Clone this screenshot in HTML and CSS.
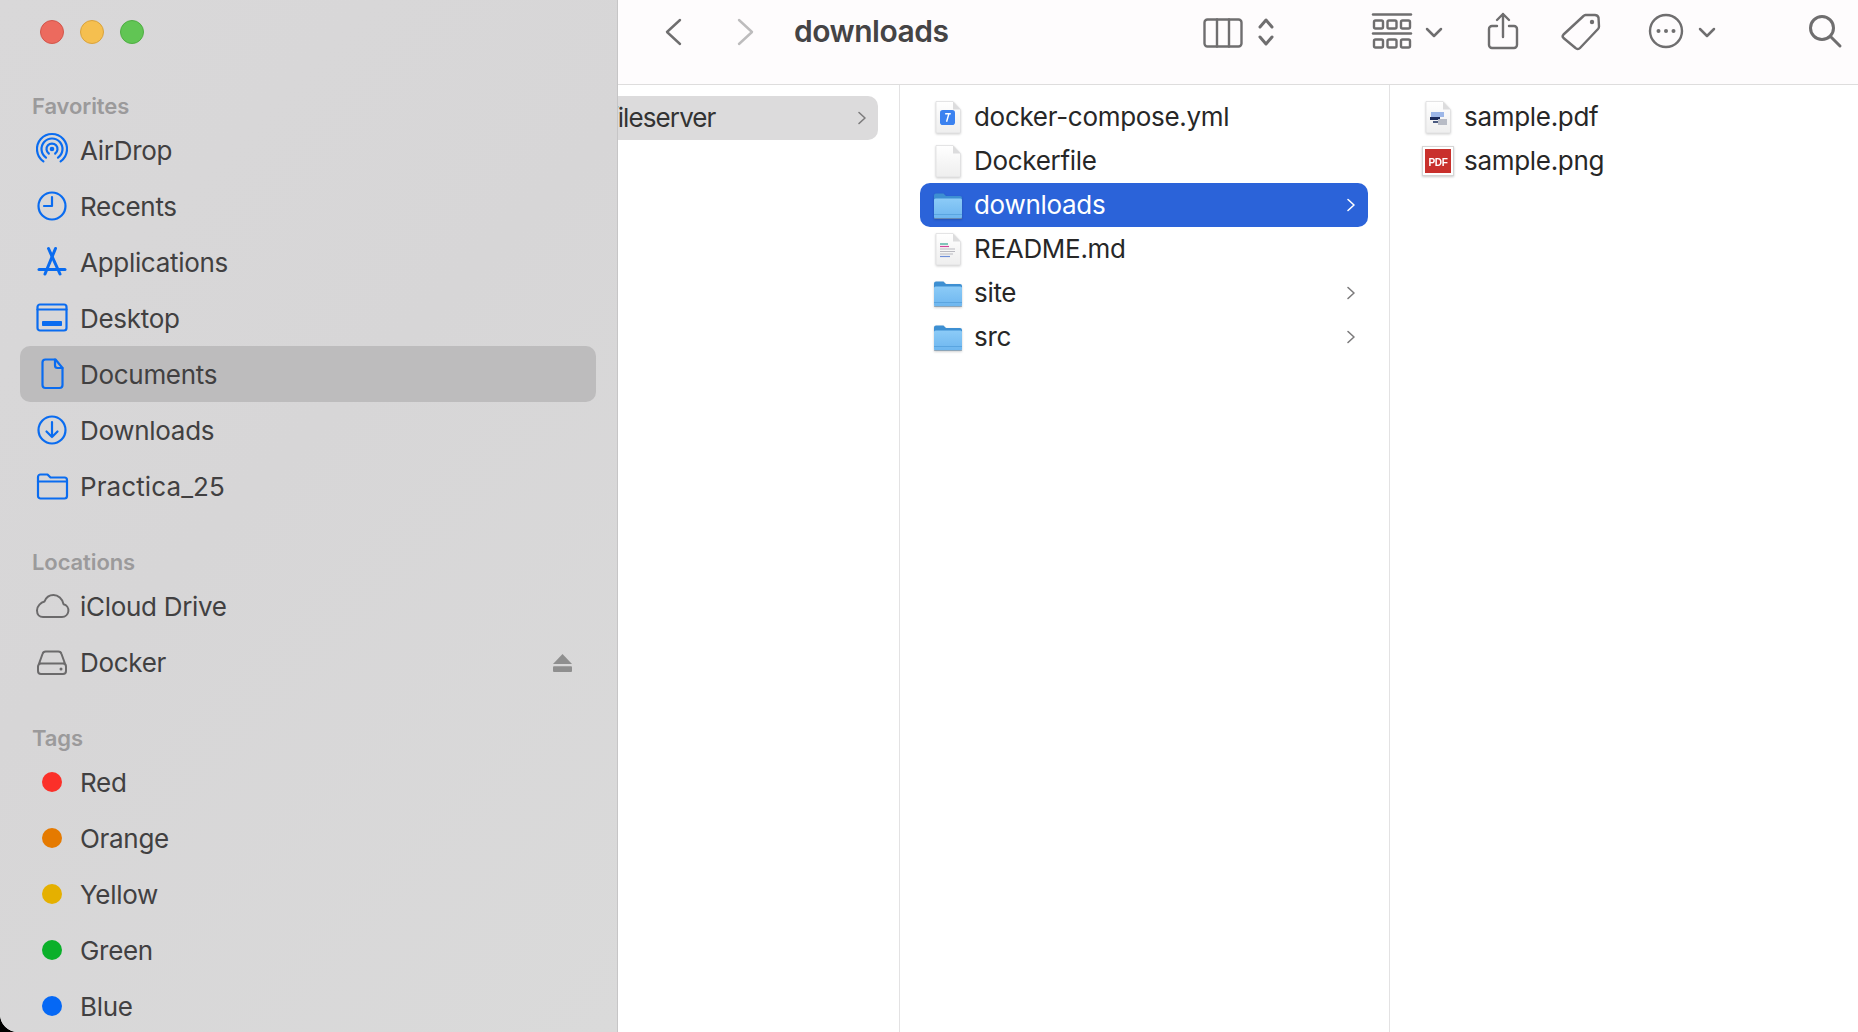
FILE: index.html
```html
<!DOCTYPE html>
<html lang="en">
<head>
<meta charset="utf-8">
<title>downloads</title>
<link rel="stylesheet" href="styles.css">
</head>
<body>
<svg class="defs" width="0" height="0" aria-hidden="true">
  <defs>
    <linearGradient id="fb" x1="0" y1="0" x2="0" y2="1"><stop offset="0" stop-color="#8ccbf7"/><stop offset="1" stop-color="#6db6ef"/></linearGradient>
    <linearGradient id="pg" x1="0" y1="0" x2="0" y2="1"><stop offset="0" stop-color="#ffffff"/><stop offset="1" stop-color="#eeeeee"/></linearGradient>
    <symbol id="folder" viewBox="0 0 32 32">
      <path d="M2 6.500a2 2 0 0 1 2-2h7.500l2.500 2.500h14a2 2 0 0 1 2 2V12H2z" fill="#3d8fd2"/>
      <rect x="2" y="9.500" width="28" height="20" rx="1.600" fill="url(#fb)"/>
      <rect x="2" y="25" width="28" height="1" fill="#5aa5e0"/>
      <rect x="2" y="29" width="28" height="1" fill="#7d8a96" opacity=".55"/>
    </symbol>
    <symbol id="page" viewBox="0 0 32 36">
      <path d="M4 2.500h17l7.500 8V33a1 1 0 0 1-1 1H5a1 1 0 0 1-1-1z" fill="url(#pg)" stroke="#dededf" stroke-width=".8"/>
      <path d="M21 2.500v8h7.500z" fill="#dcdcdd"/>
    </symbol>
    <symbol id="chev" viewBox="0 0 12 16">
      <path d="M3 2.500 9 8l-6 5.500" fill="none" stroke="currentColor" stroke-width="1.600" stroke-linecap="round" stroke-linejoin="round"/>
    </symbol>
    <symbol id="drop" viewBox="0 0 18 12">
      <path d="M2 3l7 7 7-7" fill="none" stroke="#6f6e6f" stroke-width="2.500" stroke-linecap="round" stroke-linejoin="round"/>
    </symbol>
  </defs>
</svg>

<div class="window">
  <aside class="sidebar">
    <div class="traffic">
      <span class="light light-red"></span>
      <span class="light light-yellow"></span>
      <span class="light light-green"></span>
    </div>

    <section class="group">
      <h2 class="group-title">Favorites</h2>
      <div class="side-row">
        <svg class="side-icon" viewBox="0 0 40 40"><g class="blue-line"><path d="M16.800 23.500a5.500 5.500 0 1 1 6.400 0"/><path d="M14 27.600a10.500 10.500 0 1 1 12 0"/><path d="M11.400 31.300a15 15 0 1 1 17.200 0"/></g><circle cx="20" cy="19" r="2.300" class="blue-fill"/></svg>
        <span>AirDrop</span>
      </div>
      <div class="side-row">
        <svg class="side-icon" viewBox="0 0 40 40"><g class="blue-line"><circle cx="20" cy="20" r="13.500"/><path d="M20 11v9h-8"/></g></svg>
        <span>Recents</span>
      </div>
      <div class="side-row">
        <svg class="side-icon" viewBox="0 0 40 40"><g class="blue-line blue-heavy"><path d="M23.500 6.500 13 32"/><path d="M16.500 6.500 28 32"/><path d="M7 27.500h26"/></g></svg>
        <span>Applications</span>
      </div>
      <div class="side-row">
        <svg class="side-icon" viewBox="0 0 40 40"><g class="blue-line"><rect x="5.500" y="6.500" width="29" height="26" rx="2.500"/><path d="M5.500 11.500h29"/></g><rect x="10" y="23" width="20" height="5" rx=".8" class="blue-fill"/></svg>
        <span>Desktop</span>
      </div>
      <div class="side-row is-active">
        <svg class="side-icon" viewBox="0 0 40 40"><g class="blue-line"><path d="M13.500 5.500h10l7 8.500v17a3 3 0 0 1-3 3h-14a3 3 0 0 1-3-3V8.500a3 3 0 0 1 3-3z"/><path d="M23 5.500v6a2.500 2.500 0 0 0 2.500 2.500h5"/></g></svg>
        <span>Documents</span>
      </div>
      <div class="side-row">
        <svg class="side-icon" viewBox="0 0 40 40"><g class="blue-line"><circle cx="20" cy="20" r="13.500"/><path d="M20 12v15M14.500 21.500 20 27l5.500-5.500"/></g></svg>
        <span>Downloads</span>
      </div>
      <div class="side-row">
        <svg class="side-icon" viewBox="0 0 40 40"><g class="blue-line"><path d="M6 11a2.500 2.500 0 0 1 2.500-2.500h7l3 3h14A2.500 2.500 0 0 1 35 14v16a2.500 2.500 0 0 1-2.500 2.500h-24A2.500 2.500 0 0 1 6 30z"/><path d="M6 15.500h29"/></g></svg>
        <span class="wide-name">Practica_25</span>
      </div>
    </section>

    <section class="group">
      <h2 class="group-title">Locations</h2>
      <div class="side-row">
        <svg class="side-icon" viewBox="0 0 40 40"><path class="gray-line" d="M11 31h19a6.500 6.500 0 0 0 1.500-12.800C30.500 12.500 26 9 21.500 9c-4 0-7.500 2.500-9 6.500C9 16.500 5 20 5 24.500 5 28.500 7.500 31 11 31z"/></svg>
        <span>iCloud Drive</span>
      </div>
      <div class="side-row">
        <svg class="side-icon" viewBox="0 0 40 40"><path class="gray-line" d="M6 24.500 10.500 12a3.500 3.500 0 0 1 3.200-2.500h12.600a3.500 3.500 0 0 1 3.200 2.500L34 24.500M9 21.500h22a3 3 0 0 1 3 3V29a3 3 0 0 1-3 3H9a3 3 0 0 1-3-3v-4.500a3 3 0 0 1 3-3z"/><circle cx="29" cy="27" r="1.500" class="gray-fill"/></svg>
        <span>Docker</span>
        <svg class="eject" viewBox="0 0 22 20"><path d="M11 1 21 11.500H1z" fill="#8f8f8f"/><rect x="1" y="14" width="20" height="6" rx="1" fill="#8f8f8f"/></svg>
      </div>
    </section>

    <section class="group">
      <h2 class="group-title">Tags</h2>
      <div class="side-row"><span class="side-dot-box"><span class="dot dot-red"></span></span><span>Red</span></div>
      <div class="side-row"><span class="side-dot-box"><span class="dot dot-orange"></span></span><span>Orange</span></div>
      <div class="side-row"><span class="side-dot-box"><span class="dot dot-yellow"></span></span><span>Yellow</span></div>
      <div class="side-row"><span class="side-dot-box"><span class="dot dot-green"></span></span><span>Green</span></div>
      <div class="side-row"><span class="side-dot-box"><span class="dot dot-blue"></span></span><span>Blue</span></div>
    </section>
  </aside>

  <main class="main">
    <header class="toolbar">
      <svg class="tb tb-back" viewBox="0 0 18 28"><path d="M16 2 3 14l13 12" class="tb-line"/></svg>
      <svg class="tb tb-forward" viewBox="0 0 18 28"><path d="M2 2l13 12L2 26" class="tb-line tb-dim"/></svg>
      <h1 class="title">downloads</h1>
      <svg class="tb tb-columns" viewBox="0 0 40 30"><g class="tb-line"><rect x="1.500" y="1.500" width="37" height="27" rx="3"/><path d="M14 1.500v27M26 1.500v27"/></g></svg>
      <svg class="tb tb-updown" viewBox="0 0 18 30"><g class="tb-line tb-thick"><path d="M3 10l6-7 6 7"/><path d="M3 20l6 7 6-7"/></g></svg>
      <svg class="tb tb-group" viewBox="0 0 38 36"><g class="tb-line"><path d="M0 1.500h38" /><rect x="1" y="7.500" width="9" height="8" rx="1.500"/><rect x="14.500" y="7.500" width="9" height="8" rx="1.500"/><rect x="28" y="7.500" width="9" height="8" rx="1.500"/><path d="M0 20.500h38"/><rect x="1" y="26.500" width="9" height="8" rx="1.500"/><rect x="14.500" y="26.500" width="9" height="8" rx="1.500"/><rect x="28" y="26.500" width="9" height="8" rx="1.500"/></g></svg>
      <svg class="tb tb-drop tb-drop-group"><use href="#drop"/></svg>
      <svg class="tb tb-share" viewBox="0 0 32 38"><g class="tb-line"><path d="M10 14H5a3 3 0 0 0-3 3v16a3 3 0 0 0 3 3h22a3 3 0 0 0 3-3V17a3 3 0 0 0-3-3h-5"/><path d="M16 25V2M10 8l6-6 6 6"/></g></svg>
      <svg class="tb tb-tag" viewBox="0 0 40 38"><path class="tb-line" d="M2.500 21.500 22.500 3a3 3 0 0 1 2-1h9a4 4 0 0 1 4 2.500l.5 9a4 4 0 0 1-1 2.500L19 35a3 3 0 0 1-4.500 0L2.500 25a2.500 2.500 0 0 1 0-3.500z"/><circle cx="31" cy="9" r="2.200" fill="#6f6e6f"/></svg>
      <svg class="tb tb-more" viewBox="0 0 36 36"><circle class="tb-line" cx="18" cy="18" r="16"/><circle cx="10.500" cy="18" r="2" fill="#6f6e6f"/><circle cx="18" cy="18" r="2" fill="#6f6e6f"/><circle cx="25.500" cy="18" r="2" fill="#6f6e6f"/></svg>
      <svg class="tb tb-drop tb-drop-more"><use href="#drop"/></svg>
      <svg class="tb tb-search" viewBox="0 0 34 34"><g class="tb-line tb-thick"><circle cx="14" cy="14" r="11.500"/><path d="M22.500 22.500 32 32"/></g></svg>
    </header>

    <div class="columns">
      <div class="column col-parent">
        <div class="row row-parent">
          <span class="name">fileserver</span>
          <svg class="chev"><use href="#chev"/></svg>
        </div>
      </div>

      <div class="column col-current">
        <div class="row">
          <span class="file-box">
            <svg class="doc"><use href="#page"/></svg>
            <svg class="doc-badge" viewBox="0 0 16 16"><rect width="16" height="16" rx="3" fill="#3b82f0"/><path d="M5.500 4h6M9.500 4 7 12.500" stroke="#fff" stroke-width="1.500" fill="none"/></svg>
          </span>
          <span class="name">docker-compose.yml</span>
        </div>
        <div class="row">
          <span class="file-box"><svg class="doc"><use href="#page"/></svg></span>
          <span class="name">Dockerfile</span>
        </div>
        <div class="row is-selected">
          <span class="file-box"><svg class="folder"><use href="#folder"/></svg></span>
          <span class="name">downloads</span>
          <svg class="chev"><use href="#chev"/></svg>
        </div>
        <div class="row">
          <span class="file-box">
            <svg class="doc"><use href="#page"/></svg>
            <svg class="doc-lines" viewBox="0 0 18 16"><path d="M1 1h8" stroke="#2fa38f"/><path d="M1 3.500h9" stroke="#d0459a"/><path d="M1 6h15M1 8.500h15M1 11h13" stroke="#b9b9c0"/><path d="M1 13.500h10" stroke="#6f8fd8"/></svg>
          </span>
          <span class="name">README.md</span>
        </div>
        <div class="row">
          <span class="file-box"><svg class="folder"><use href="#folder"/></svg></span>
          <span class="name">site</span>
          <svg class="chev"><use href="#chev"/></svg>
        </div>
        <div class="row">
          <span class="file-box"><svg class="folder"><use href="#folder"/></svg></span>
          <span class="name">src</span>
          <svg class="chev"><use href="#chev"/></svg>
        </div>
      </div>

      <div class="column col-detail">
        <div class="row">
          <span class="file-box">
            <svg class="doc"><use href="#page"/></svg>
            <svg class="doc-thumb" viewBox="0 0 18 14"><rect x="1" y="0" width="13" height="5" fill="#9db7e8"/><rect x="0" y="5" width="10" height="3" fill="#1c2c5c"/><rect x="8" y="7" width="9" height="6" fill="#b8bcc6"/><rect x="3" y="9" width="5" height="2" fill="#4a5a80"/></svg>
          </span>
          <span class="name">sample.pdf</span>
        </div>
        <div class="row">
          <span class="file-box">
            <svg class="png-thumb" viewBox="0 0 32 30"><rect x=".5" y=".5" width="31" height="29" fill="#fff" stroke="#d5d5d5"/><rect x="3" y="3" width="26" height="24" fill="#c9302c"/><text x="16" y="19.500" class="pdf-label" text-anchor="middle">PDF</text></svg>
          </span>
          <span class="name">sample.png</span>
        </div>
      </div>
    </div>
  </main>
</div>
</body>
</html>
```

FILE: styles.css
```css
* { box-sizing: border-box; }

html, body {
  margin: 0;
  height: 100%;
  overflow: hidden;
  background: #000;
}

.defs { position: absolute; }

.window {
  display: flex;
  width: 1858px;
  height: 1032px;
  overflow: hidden;
  border-bottom-left-radius: 18px;
  font-family: Inter, "Liberation Sans", sans-serif;
  background: #fff;
}

/* Sidebar */
.sidebar {
  flex: 0 0 618px;
  height: 1032px;
  overflow: hidden;
  background: linear-gradient(135deg, #d9d8d9 0%, #d7d6d7 45%, #dadada 100%);
  border-right: 1px solid #c6c5c6;
  color: #414041;
}

.traffic {
  display: flex;
  gap: 16px;
  height: 88px;
  padding: 20px 0 0 40px;
}

.light {
  width: 24px;
  height: 24px;
  border-radius: 50%;
}
.light-red { background: #ec6a5e; border: 1px solid #d2564b; }
.light-yellow { background: #f5bf4f; border: 1px solid #d9a33d; }
.light-green { background: #61c554; border: 1px solid #4fae43; }

.group + .group { margin-top: 30px; }

.group-title {
  margin: 0;
  height: 34px;
  padding-left: 32px;
  font-size: 22px;
  line-height: 36px;
  font-weight: 600;
  color: #9b9a9b;
  letter-spacing: -0.1px;
}

.side-row {
  display: flex;
  align-items: center;
  height: 56px;
  margin: 0 21px 0 20px;
  padding: 0 23px 0 12px;
  border-radius: 10px;
  font-size: 26px;
  letter-spacing: -0.3px;
  white-space: nowrap;
}
.side-row.is-active { background: #bdbcbd; }
.wide-name { letter-spacing: 0.1px; }

.side-icon {
  flex: none;
  width: 40px;
  height: 40px;
  margin-right: 8px;
}
.side-dot-box {
  flex: none;
  display: flex;
  align-items: center;
  justify-content: center;
  width: 40px;
  margin-right: 8px;
}

.blue-line { fill: none; stroke: #0a6cf0; stroke-width: 2.2; stroke-linecap: round; stroke-linejoin: round; }
.blue-heavy { stroke-width: 3; }
.blue-fill { fill: #0a6cf0; }
.gray-line { fill: none; stroke: #6b6a6b; stroke-width: 2; stroke-linecap: round; stroke-linejoin: round; }
.gray-fill { fill: #6b6a6b; }

.eject {
  width: 21px;
  height: 19px;
  margin-left: auto;
}

.dot {
  width: 20px;
  height: 20px;
  border-radius: 50%;
}
.dot-red { background: #fb3029; }
.dot-orange { background: #e57a00; }
.dot-yellow { background: #e5b000; }
.dot-green { background: #0bb02a; }
.dot-blue { background: #0568f5; }

/* Main area */
.main {
  flex: 1;
  min-width: 0;
  display: flex;
  flex-direction: column;
}

.toolbar {
  flex: 0 0 85px;
  display: flex;
  align-items: flex-start;
  background: #fefcfd;
  border-bottom: 1px solid #dedddd;
}

.tb { flex: none; display: block; overflow: visible; }
.tb-line { fill: none; stroke: #6f6e6f; stroke-width: 2.4; stroke-linecap: round; stroke-linejoin: round; }
.tb-thick { stroke-width: 3; }
.tb-dim { stroke: #bdbcbd; }

.tb-back { width: 18px; height: 28px; margin: 18px 0 0 46px; }
.tb-forward { width: 18px; height: 28px; margin: 18px 0 0 55px; }

.title {
  margin: 11px 0 0 39px;
  width: 409px;
  font-size: 30px;
  line-height: 40px;
  font-weight: 600;
  letter-spacing: -0.5px;
  color: #454445;
}

.tb-columns { width: 40px; height: 30px; margin: 18px 0 0 0; }
.tb-updown { width: 18px; height: 30px; margin: 17px 0 0 14px; }
.tb-group { width: 38px; height: 36px; margin: 13px 0 0 98px; }
.tb-drop { width: 18px; height: 12px; margin-top: 26px; }
.tb-drop-group { margin-left: 14px; }
.tb-share { width: 32px; height: 38px; margin: 12px 0 0 44px; }
.tb-tag { width: 40px; height: 38px; margin: 13px 0 0 42px; }
.tb-more { width: 36px; height: 36px; margin: 13px 0 0 47px; }
.tb-drop-more { margin-left: 14px; }
.tb-search { width: 34px; height: 34px; margin: 14px 0 0 92px; }

.columns {
  flex: 1;
  display: flex;
  min-height: 0;
  background: #fff;
}

.column {
  padding-top: 10px;
  overflow: hidden;
  color: #272727;
}
.col-parent { flex: 0 0 282px; border-right: 1px solid #e3e2e3; padding: 11px 21px 0 0; }
.col-current { flex: 0 0 490px; border-right: 1px solid #e3e2e3; padding: 10px 21px 0 20px; }
.col-detail { flex: 1; padding-left: 20px; }

.row {
  display: flex;
  align-items: center;
  height: 44px;
  padding: 0 11px 0 12px;
  font-size: 26px;
  letter-spacing: -0.3px;
  white-space: nowrap;
  border-radius: 10px;
}
.name { margin-top: -1px; }
.row .chev { margin-left: auto; color: #7c7b7c; }
.row.is-selected { background: #2b63d9; color: #fff; }
.row.is-selected .chev { color: #fff; }

.row-parent {
  margin-left: -9px;
  padding: 0 10px 0 0;
  background: #dcdbdc;
  color: #333;
  letter-spacing: -0.9px;
}
.row-parent .name { margin-top: -2px; }

.chev { flex: none; width: 12px; height: 16px; }

.file-box {
  position: relative;
  flex: none;
  display: flex;
  align-items: center;
  justify-content: center;
  width: 32px;
  height: 36px;
  margin-right: 10px;
}
.doc { width: 32px; height: 36px; filter: drop-shadow(0 1px 1px rgba(0, 0, 0, .18)); }
.folder { width: 32px; height: 32px; filter: drop-shadow(0 1px 1px rgba(0, 0, 0, .2)); }

.doc-badge { position: absolute; left: 8px; top: 11px; width: 15px; height: 15px; }
.doc-lines { position: absolute; left: 7px; top: 12px; width: 18px; height: 16px; }
.doc-lines path { stroke-width: 1.2; }
.doc-thumb { position: absolute; left: 8px; top: 13px; width: 18px; height: 14px; }
.png-thumb { width: 32px; height: 30px; filter: drop-shadow(0 1px 1px rgba(0, 0, 0, .2)); }
.pdf-label { font-family: "Liberation Sans", sans-serif; font-size: 10px; font-weight: 700; fill: #fff; }
```
